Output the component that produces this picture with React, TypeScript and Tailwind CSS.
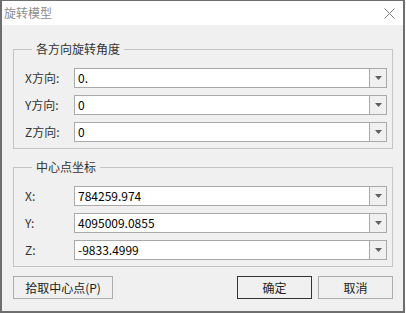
import React from "react";

const font = { fontFamily: '"Noto Sans CJK SC", "Microsoft YaHei", sans-serif' };

function Combo({ value }: { value: string }) {
  return (
    <div className="flex h-[20px] flex-1 border border-[#a9a9a9] bg-white">
      <div className="flex flex-1 items-center pl-[3px] text-[12px] leading-none text-black">{value}</div>
      <div className="flex w-[17px] items-center justify-center border-l border-[#a9a9a9] bg-[#f0f0f0]">
        <svg width="7" height="4" viewBox="0 0 7 4">
          <path d="M0 0H7L3.5 4Z" fill="#606060" />
        </svg>
      </div>
    </div>
  );
}

function Row({ label, value }: { label: string; value: string }) {
  return (
    <div className="flex items-center">
      <div className="w-[49px] text-[12px] leading-none text-[#333]">{label}</div>
      <Combo value={value} />
    </div>
  );
}

function Group({ title, rows }: { title: string; rows: [string, string][] }) {
  return (
    <fieldset className="mx-0 border border-[#c4c4c4] pb-[6px] pl-[11px] pr-[5px] pt-[11px]">
      <legend className="ml-[7px] px-[4px] text-[12px] leading-[16px] text-[#333]">{title}</legend>
      <div className="flex flex-col gap-[7px]">
        {rows.map(([l, v]) => (
          <Row key={l} label={l} value={v} />
        ))}
      </div>
    </fieldset>
  );
}

export default function App() {
  return (
    <div className="h-[313px] w-[406px] bg-white" style={font}>
      <div className="flex h-[313px] w-[405px] flex-col border-b-2 border-l-2 border-r-2 border-t border-[#6e6e6e]">
        <div className="flex h-[24px] items-center justify-between bg-white pl-[2px] pr-[8px]">
          <span className="text-[12px] leading-none text-[#8c8c8c]">旋转模型</span>
          <svg width="11" height="11" viewBox="0 0 11 11">
            <path d="M0.5 0.5L10.5 10.5M10.5 0.5L0.5 10.5" stroke="#7a7a7a" strokeWidth="1" />
          </svg>
        </div>
        <div className="flex flex-1 flex-col bg-[#f0f0f0] pl-[11px] pr-[10px] pt-[16px]">
          <Group
            title="各方向旋转角度"
            rows={[
              ["X方向:", "0."],
              ["Y方向:", "0"],
              ["Z方向:", "0"],
            ]}
          />
          <div className="h-[10px]" />
          <Group
            title="中心点坐标"
            rows={[
              ["X:", "784259.974"],
              ["Y:", "4095009.0855"],
              ["Z:", "-9833.4999"],
            ]}
          />
          <div className="mt-[9px] flex items-center">
            <button className="h-[23px] w-[100px] border border-[#adadad] bg-[#f0f0f0] text-[12px] leading-none text-[#222]">
              拾取中心点(P)
            </button>
            <div className="flex-1" />
            <button className="h-[23px] w-[75px] border border-[#333] bg-[#f0f0f0] text-[12px] leading-none text-[#222]">
              确定
            </button>
            <button className="ml-[6px] h-[23px] w-[75px] border border-[#adadad] bg-[#f0f0f0] text-[12px] leading-none text-[#222]">
              取消
            </button>
          </div>
        </div>
      </div>
    </div>
  );
}
